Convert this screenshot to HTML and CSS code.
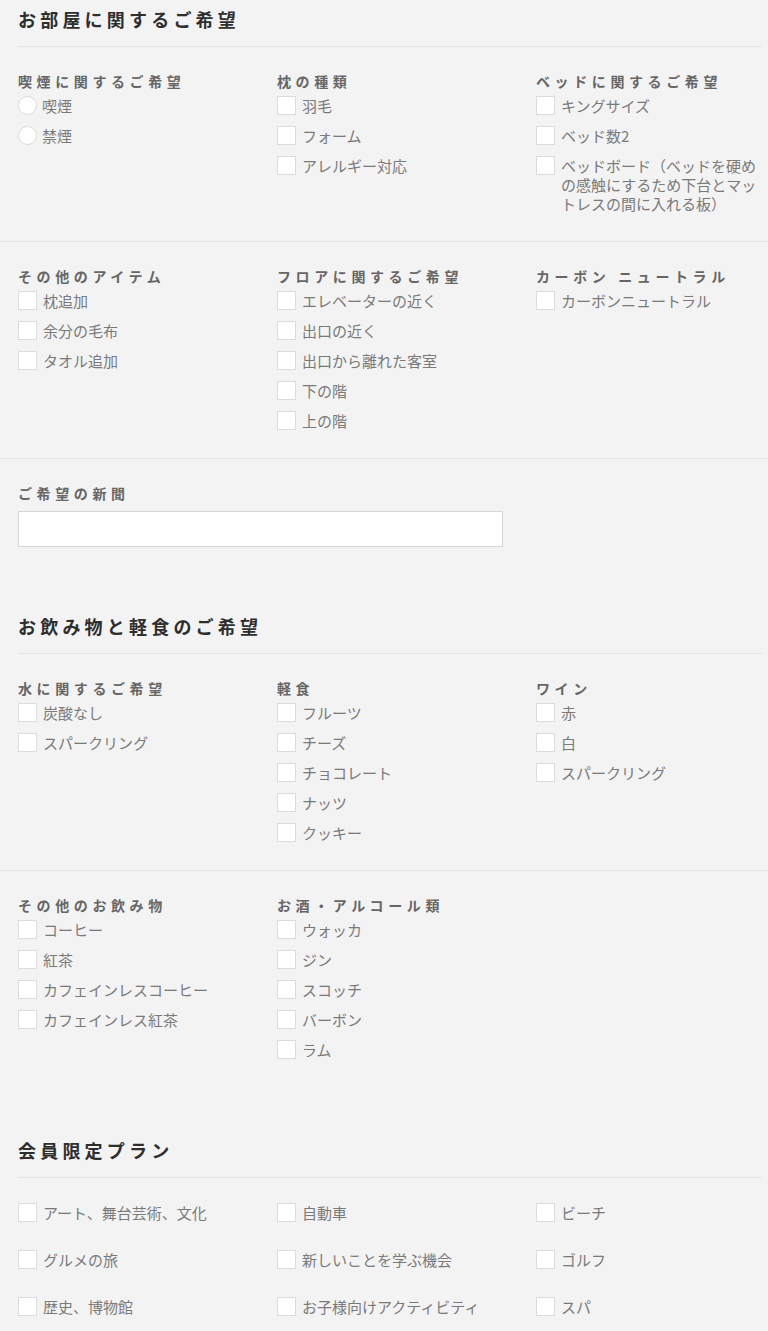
FILE: index.html
```html
<!DOCTYPE html>
<html lang="ja">
<head>
<meta charset="utf-8">
<title>ご希望</title>
<link rel="stylesheet" href="styles.css">
</head>
<body>
<div class="page">

<section class="section">
  <h2 class="section-title">お部屋に関するご希望</h2>
  <div class="row">
    <div class="group">
      <h3 class="group-label">喫煙に関するご希望</h3>
      <ul class="opts">
        <li class="opt"><span class="radio"></span><span class="opt-text">喫煙</span></li>
        <li class="opt"><span class="radio"></span><span class="opt-text">禁煙</span></li>
      </ul>
    </div>
    <div class="group">
      <h3 class="group-label">枕の種類</h3>
      <ul class="opts">
        <li class="opt"><span class="box"></span><span class="opt-text">羽毛</span></li>
        <li class="opt"><span class="box"></span><span class="opt-text">フォーム</span></li>
        <li class="opt"><span class="box"></span><span class="opt-text">アレルギー対応</span></li>
      </ul>
    </div>
    <div class="group">
      <h3 class="group-label">ベッドに関するご希望</h3>
      <ul class="opts">
        <li class="opt"><span class="box"></span><span class="opt-text">キングサイズ</span></li>
        <li class="opt"><span class="box"></span><span class="opt-text">ベッド数2</span></li>
        <li class="opt"><span class="box"></span><span class="opt-text">ベッドボード（ベッドを硬めの感触にするため下台とマットレスの間に入れる板）</span></li>
      </ul>
    </div>
  </div>
  <div class="row">
    <div class="group">
      <h3 class="group-label">その他のアイテム</h3>
      <ul class="opts">
        <li class="opt"><span class="box"></span><span class="opt-text">枕追加</span></li>
        <li class="opt"><span class="box"></span><span class="opt-text">余分の毛布</span></li>
        <li class="opt"><span class="box"></span><span class="opt-text">タオル追加</span></li>
      </ul>
    </div>
    <div class="group">
      <h3 class="group-label">フロアに関するご希望</h3>
      <ul class="opts">
        <li class="opt"><span class="box"></span><span class="opt-text">エレベーターの近く</span></li>
        <li class="opt"><span class="box"></span><span class="opt-text">出口の近く</span></li>
        <li class="opt"><span class="box"></span><span class="opt-text">出口から離れた客室</span></li>
        <li class="opt"><span class="box"></span><span class="opt-text">下の階</span></li>
        <li class="opt"><span class="box"></span><span class="opt-text">上の階</span></li>
      </ul>
    </div>
    <div class="group">
      <h3 class="group-label">カーボン ニュートラル</h3>
      <ul class="opts">
        <li class="opt"><span class="box"></span><span class="opt-text">カーボンニュートラル</span></li>
      </ul>
    </div>
  </div>
  <div class="row row-last">
    <div class="field">
      <label class="group-label field-label" for="paper">ご希望の新聞</label>
      <input class="text-input" id="paper" type="text">
    </div>
  </div>
</section>

<section class="section section-drinks">
  <h2 class="section-title">お飲み物と軽食のご希望</h2>
  <div class="row">
    <div class="group">
      <h3 class="group-label">水に関するご希望</h3>
      <ul class="opts">
        <li class="opt"><span class="box"></span><span class="opt-text">炭酸なし</span></li>
        <li class="opt"><span class="box"></span><span class="opt-text">スパークリング</span></li>
      </ul>
    </div>
    <div class="group">
      <h3 class="group-label">軽食</h3>
      <ul class="opts">
        <li class="opt"><span class="box"></span><span class="opt-text">フルーツ</span></li>
        <li class="opt"><span class="box"></span><span class="opt-text">チーズ</span></li>
        <li class="opt"><span class="box"></span><span class="opt-text">チョコレート</span></li>
        <li class="opt"><span class="box"></span><span class="opt-text">ナッツ</span></li>
        <li class="opt"><span class="box"></span><span class="opt-text">クッキー</span></li>
      </ul>
    </div>
    <div class="group">
      <h3 class="group-label">ワイン</h3>
      <ul class="opts">
        <li class="opt"><span class="box"></span><span class="opt-text">赤</span></li>
        <li class="opt"><span class="box"></span><span class="opt-text">白</span></li>
        <li class="opt"><span class="box"></span><span class="opt-text">スパークリング</span></li>
      </ul>
    </div>
  </div>
  <div class="row row-last">
    <div class="group">
      <h3 class="group-label">その他のお飲み物</h3>
      <ul class="opts">
        <li class="opt"><span class="box"></span><span class="opt-text">コーヒー</span></li>
        <li class="opt"><span class="box"></span><span class="opt-text">紅茶</span></li>
        <li class="opt"><span class="box"></span><span class="opt-text">カフェインレスコーヒー</span></li>
        <li class="opt"><span class="box"></span><span class="opt-text">カフェインレス紅茶</span></li>
      </ul>
    </div>
    <div class="group">
      <h3 class="group-label">お酒・アルコール類</h3>
      <ul class="opts">
        <li class="opt"><span class="box"></span><span class="opt-text">ウォッカ</span></li>
        <li class="opt"><span class="box"></span><span class="opt-text">ジン</span></li>
        <li class="opt"><span class="box"></span><span class="opt-text">スコッチ</span></li>
        <li class="opt"><span class="box"></span><span class="opt-text">バーボン</span></li>
        <li class="opt"><span class="box"></span><span class="opt-text">ラム</span></li>
      </ul>
    </div>
  </div>
</section>

<section class="section section-plans">
  <h2 class="section-title">会員限定プラン</h2>
  <ul class="plans">
    <li class="opt"><span class="box"></span><span class="opt-text">アート、舞台芸術、文化</span></li>
    <li class="opt"><span class="box"></span><span class="opt-text">自動車</span></li>
    <li class="opt"><span class="box"></span><span class="opt-text">ビーチ</span></li>
    <li class="opt"><span class="box"></span><span class="opt-text">グルメの旅</span></li>
    <li class="opt"><span class="box"></span><span class="opt-text">新しいことを学ぶ機会</span></li>
    <li class="opt"><span class="box"></span><span class="opt-text">ゴルフ</span></li>
    <li class="opt"><span class="box"></span><span class="opt-text">歴史、博物館</span></li>
    <li class="opt"><span class="box"></span><span class="opt-text">お子様向けアクティビティ</span></li>
    <li class="opt"><span class="box"></span><span class="opt-text">スパ</span></li>
  </ul>
</section>

</div>
</body>
</html>
```

FILE: styles.css
```css
* {
  box-sizing: border-box;
}

html, body {
  margin: 0;
  padding: 0;
  background: #f3f3f3;
}

body {
  font-family: "Noto Sans CJK JP", "Noto Sans", sans-serif;
  color: #777;
}

.page {
  width: 768px;
}

.section-title {
  margin: 0 6px 0 18px;
  padding: 6px 0 14px;
  font-size: 18px;
  line-height: 26px;
  font-weight: 700;
  letter-spacing: 4.2px;
  color: #2e2e2e;
  border-bottom: 1px solid #e4e4e4;
}

.section-drinks {
  margin-top: 32px;
}

.section-plans {
  margin-top: 44px;
}

.row {
  display: grid;
  grid-template-columns: 259px 259px 1fr;
  padding: 24px 10px 28px 18px;
  border-bottom: 1px solid #e4e4e4;
}

.row-last {
  border-bottom: none;
}

.group-label {
  display: block;
  margin: 0 0 5px;
  font-size: 14px;
  line-height: 20px;
  font-weight: 700;
  letter-spacing: 4.6px;
  color: #666;
}

.opts {
  list-style: none;
  margin: 0;
  padding: 0;
  display: flex;
  flex-direction: column;
  gap: 11px;
}

.opt {
  display: flex;
  align-items: flex-start;
  font-size: 15px;
  line-height: 19px;
  color: #7a7a7a;
}

.box {
  flex: none;
  width: 19px;
  height: 19px;
  margin-right: 6px;
  background: #fff;
  border: 1px solid #dcdcdc;
}

.radio {
  flex: none;
  width: 19px;
  height: 19px;
  margin-right: 5px;
  background: #fff;
  border: 1px solid #dcdcdc;
  border-radius: 50%;
}

.opt-text {
  min-width: 0;
}

.field {
  grid-column: 1 / -1;
  display: flex;
  flex-direction: column;
  align-items: flex-start;
}

.field-label {
  margin-bottom: 8px;
}

.text-input {
  width: 485px;
  height: 36px;
  margin: 0;
  padding: 0 8px;
  background: #fff;
  border: 1px solid #d6d6d6;
  border-radius: 0;
  font: inherit;
  outline: none;
}

.plans {
  list-style: none;
  margin: 0;
  padding: 25px 10px 0 18px;
  display: grid;
  grid-template-columns: 259px 259px 1fr;
  row-gap: 28px;
}
```
